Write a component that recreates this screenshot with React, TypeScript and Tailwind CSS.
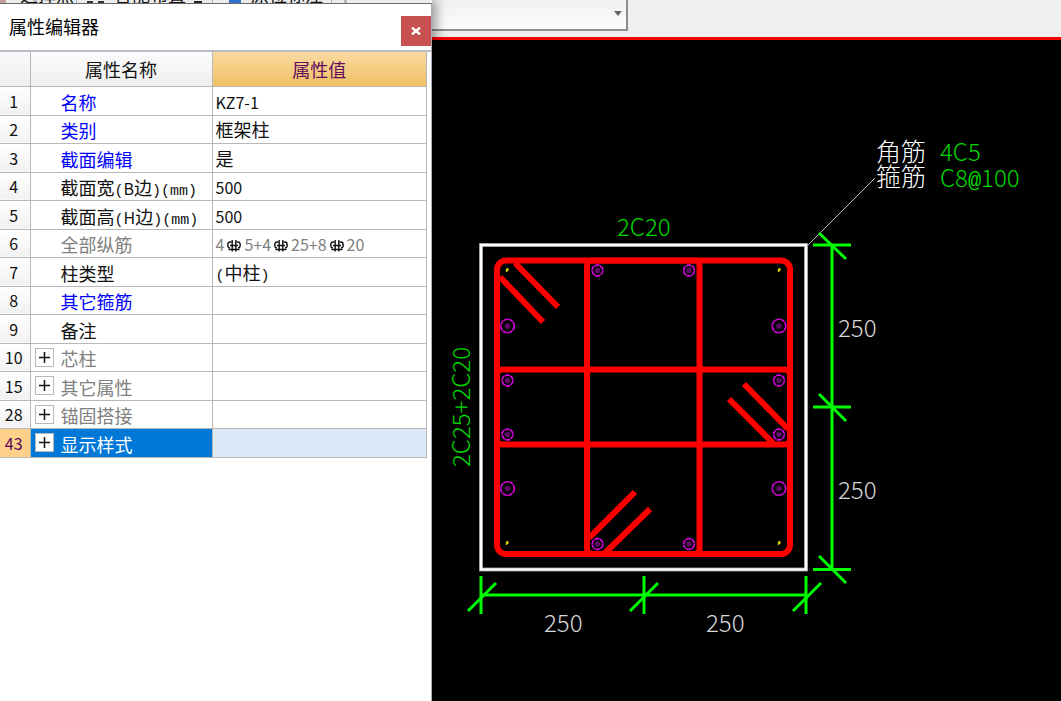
import clsx from "clsx";

interface PropertyRow {
  id: number;
  name: string;
  value?: string;
  tone?: "link" | "muted";
  group?: boolean;
}

const ROWS: PropertyRow[] = [
  { id: 1, name: "名称", value: "KZ7-1", tone: "link" },
  { id: 2, name: "类别", value: "框架柱", tone: "link" },
  { id: 3, name: "截面编辑", value: "是", tone: "link" },
  { id: 4, name: "截面宽(B边)(mm)", value: "500" },
  { id: 5, name: "截面高(H边)(mm)", value: "500" },
  { id: 6, name: "全部纵筋", value: "4C5+4C25+8C20", tone: "muted" },
  { id: 7, name: "柱类型", value: "(中柱)" },
  { id: 8, name: "其它箍筋", tone: "link" },
  { id: 9, name: "备注" },
  { id: 10, name: "芯柱", tone: "muted", group: true },
  { id: 15, name: "其它属性", tone: "muted", group: true },
  { id: 28, name: "锚固搭接", tone: "muted", group: true },
  { id: 43, name: "显示样式", group: true },
];

const SELECTED_ID = 43;

// Longitudinal bars, [x, y, radius]
const BARS = [
  [597.5, 270.5, 5.4],
  [689, 270.5, 5.4],
  [507.5, 380.5, 5.4],
  [779, 380.5, 5.4],
  [507.5, 434.5, 5.4],
  [779, 434.5, 5.4],
  [597.5, 544, 5.4],
  [689, 544, 5.4],
  [507.5, 326, 6.8],
  [779, 326, 6.8],
  [507.5, 488.5, 6.8],
  [779, 488.5, 6.8],
];

const CORNER_BARS = [
  [507, 270],
  [779, 270],
  [507, 543],
  [779, 543],
];

function RebarSymbol() {
  return (
    <svg
      viewBox="0 0 14 14"
      className="mx-[3px] inline-block h-[14px] w-[14px] align-[-2px]"
      fill="none"
      stroke="#111"
      strokeWidth="1.4"
    >
      <path d="M4.500 3H3C1.600 3 .8 4.200 .8 6s.8 3 2.200 3M9.500 3H11c1.400 0 2.200 1.200 2.200 3s-.8 3-2.200 3" />
      <path d="M3 6.500h8M1.500 10.500h11M5.200 1v11.500M8.800 1v11.500" />
    </svg>
  );
}

// Brackets and lower case letters are half the width of a Chinese character
function MixedText({ text }: { text: string }) {
  return (
    <>
      {text.split(/([()a-z]+|[\dA-Z+-]+)/).map((part, i) => {
        if (/^[()a-z]/.test(part)) {
          return (
            <span key={i} className="font-['Liberation_Mono',monospace] text-[15px] leading-none">
              {part}
            </span>
          );
        }
        if (/^[\dA-Z+-]/.test(part)) {
          return (
            <span key={i} className="text-[16px] leading-none">
              {part}
            </span>
          );
        }
        return part;
      })}
    </>
  );
}

function PropertyValue({ row }: { row: PropertyRow }) {
  if (!row.value) return null;
  if (row.id !== 6) return <MixedText text={row.value} />;
  return (
    <span className="text-[16px] leading-none">
      {row.value.split("C").map((part, i) => (
        <span key={i}>
          {i > 0 && <RebarSymbol />}
          {part}
        </span>
      ))}
    </span>
  );
}

function PropertyTable() {
  return (
    <table className="w-[427px] table-fixed border-collapse text-[18px] leading-[20px]">
      <colgroup>
        <col className="w-[30px]" />
        <col className="w-[182px]" />
        <col />
      </colgroup>
      <thead>
        <tr className="h-[34px]">
          <th className="border-r border-b border-[#b8b8b8] bg-linear-to-b from-[#fafafa] to-[#efefef]" />
          <th className="border border-t-0 border-[#b8b8b8] bg-linear-to-b from-[#fbfbfb] to-[#efefef] p-0 font-normal">
            属性名称
          </th>
          <th className="border border-t-0 border-[#b8b8b8] bg-linear-to-b from-[#f9daa0] to-[#f0c062] p-0 font-normal text-[#650a5c]">
            属性值
          </th>
        </tr>
      </thead>
      <tbody>
        {ROWS.map((row) => {
          const selected = row.id === SELECTED_ID;
          return (
            <tr key={row.id} className="odd:h-[29px] even:h-[28px]">
              <td
                className={clsx(
                  "border-r border-b border-[#b8b8b8] p-0 pr-[2px] text-center text-[16px]",
                  selected
                    ? "bg-[#ffd08a] text-[#5b0a5b]"
                    : "bg-linear-to-b from-white to-[#f1f1f1]",
                )}
              >
                {row.id}
              </td>
              <td
                className={clsx(
                  "border border-[#b8b8b8] p-0 whitespace-nowrap",
                  selected && "bg-[#0078d7] text-white",
                  row.tone === "link" && "text-[#0000ff]",
                  row.tone === "muted" && "text-[#808080]",
                )}
              >
                <div className="flex items-center">
                  <div className="flex w-[30px] shrink-0 pl-[4px]">
                    {row.group && (
                      <button
                        aria-label={row.name}
                        className="flex h-[19px] w-[19px] items-center justify-center border border-[#b8b8b8] bg-white"
                      >
                        <svg viewBox="0 0 11 11" className="h-[11px] w-[11px]" stroke="#111" strokeWidth="1.5">
                          <path d="M0 5.5h11M5.5 0v11" />
                        </svg>
                      </button>
                    )}
                  </div>
                  <span className="h-[22px] pt-[2px]">
                    <MixedText text={row.name} />
                  </span>
                </div>
              </td>
              <td
                className={clsx(
                  "border border-[#b8b8b8] p-0 pl-[3px] whitespace-nowrap",
                  selected && "bg-[#d9e9f8]",
                  row.tone === "muted" && "text-[#808080]",
                )}
              >
                <div className="h-[20px]">
                  <PropertyValue row={row} />
                </div>
              </td>
            </tr>
          );
        })}
      </tbody>
    </table>
  );
}

function ColumnSection() {
  return (
    <svg
      viewBox="432 40 629 661"
      className="block w-full font-['Noto_Sans_CJK_SC',sans-serif] font-light"
      fill="none"
    >
      <path d="M808 245 875 178" stroke="#c8c8c8" />
      <rect x="481" y="245" width="325" height="324.5" stroke="#8a8a8a" strokeWidth="4" />
      <rect x="481" y="245" width="325" height="324.5" stroke="#fff" strokeWidth="2.4" />

      <g stroke="#f00" strokeWidth="6">
        <rect x="497" y="260.5" width="293" height="293.5" rx="9" />
        <rect x="497" y="369.5" width="293" height="75" rx="5" />
        <rect x="587" y="260.5" width="112.5" height="293.5" rx="5" />
        <path d="M515 263 558 307M500 277 543 322" />
        <path d="M744 384 788 429M729 399 773 443" />
        <path d="M635 492 589 538M650 509 605 553" />
      </g>

      {BARS.map(([x, y, r]) => (
        <g key={`${x}-${y}`}>
          <circle cx={x} cy={y} r={r} stroke="#e000e8" strokeWidth="1.6" strokeDasharray="5 .5" />
          <circle cx={x} cy={y} r="2.8" fill="#5c0a66" />
        </g>
      ))}
      {CORNER_BARS.map(([x, y]) => (
        <path
          key={`${x}-${y}`}
          d={`M${x - 0.5} ${y + 2}v-3.500M${x + 0.8} ${y + 1}v-3`}
          stroke="#d8d000"
          strokeWidth="1.4"
        />
      ))}

      <g stroke="#0f0" strokeWidth="3">
        <path d="M832 245V570M813 245h38M813 407h38M813 569.500h38" />
        <path d="M819 233l27 26M819 394l27 27M819 556l27 27" />
        <path d="M481 595H806M481 576v38M644 576v38M806 576v38" />
        <path d="M468 611l28-28M630 611l28-28M793 611l28-28" />
      </g>

      <g fill="#d8d8d8" className="text-[24px]">
        <text x="838" y="337">250</text>
        <text x="838" y="499">250</text>
        <text x="544" y="632">250</text>
        <text x="706" y="632">250</text>
      </g>
      <g fill="#fff" className="text-[25px]">
        <text x="876" y="161">角筋</text>
        <text x="876" y="186">箍筋</text>
      </g>
      <g fill="#00d800" className="text-[24px]">
        <text x="617" y="236">2C20</text>
        <text x="940" y="161">4C5</text>
        <text x="940" y="187">
          C8
          <tspan className="font-['Liberation_Mono',monospace] text-[22px]">@</tspan>
          100
        </text>
        <text transform="translate(470 467) rotate(-90)">2C25+2C20</text>
      </g>
    </svg>
  );
}

function ToolbarStrip() {
  return (
    <div className="flex h-[3px] items-end overflow-hidden bg-[#ececec] text-[18px] leading-[18px] whitespace-nowrap">
      <span className="h-[3px] w-[6px] bg-[#c9a0a0]" />
      <span className="ml-[14px] w-[56px]">选择点</span>
      <span className="h-[3px] w-px bg-[#b0b0b0]" />
      <span className="ml-[10px] h-[2px] w-[6px] bg-[#333]" />
      <span className="ml-[5px] h-[2px] w-[6px] bg-[#333]" />
      <span className="ml-[10px] w-[74px]">智能布置</span>
      <span className="ml-[6px] h-[2px] w-[8px] bg-[#222]" />
      <span className="ml-[10px] h-[3px] w-px bg-[#b0b0b0]" />
      <span className="ml-[16px] h-[3px] w-[12px] bg-[#2f6fd0]" />
      <span className="ml-[10px] w-[80px]">原位标注</span>
      <span className="h-[3px] w-px bg-[#b0b0b0]" />
      <span className="ml-[12px] h-[3px] w-[3px] bg-[#b8b8b8]" />
    </div>
  );
}

export default function App() {
  return (
    <div className="flex min-h-screen bg-black font-['Noto_Sans_CJK_SC',sans-serif] text-[#111]">
      <aside className="z-10 flex w-[432px] shrink-0 flex-col bg-white shadow-[3px_0_12px_rgba(0,0,0,0.45)]">
        <ToolbarStrip />
        <div className="flex-1 border-t border-r border-t-[#6a6a6a] border-r-[#a8adb8]">
          <header className="flex h-[48px] items-center justify-between border-b-2 border-[#b9bcc6] pl-[9px]">
            <h1 className="pb-[2px] text-[18px] text-black">属性编辑器</h1>
            <button
              aria-label="关闭"
              className="mt-[8px] flex h-[30px] w-[30px] items-center justify-center bg-[#c75050]"
            >
              <svg viewBox="0 0 10 8" className="h-[8px] w-[10px]" stroke="#fff" strokeWidth="2.4">
                <path d="M1 .5 9 7.500M9 .5 1 7.500" />
              </svg>
            </button>
          </header>
          <PropertyTable />
        </div>
      </aside>

      <main className="min-w-0 flex-1">
        <div className="h-[40px] border-b-3 border-[#ff0000] bg-[#efefef]">
          <div className="relative h-[31px] w-[196px]">
            <select
              aria-label="构件"
              className="h-full w-full appearance-none border-r-2 border-b-2 border-[#8b8e8a] bg-linear-to-b from-[#f1f1f1] to-[#fcfcfc]"
            />
            <svg viewBox="0 0 8 5" className="pointer-events-none absolute right-[6px] bottom-[15px] h-[5px] w-[8px]" fill="#666">
              <path d="M0 0h8L4 5z" />
            </svg>
          </div>
        </div>
        <ColumnSection />
      </main>
    </div>
  );
}
